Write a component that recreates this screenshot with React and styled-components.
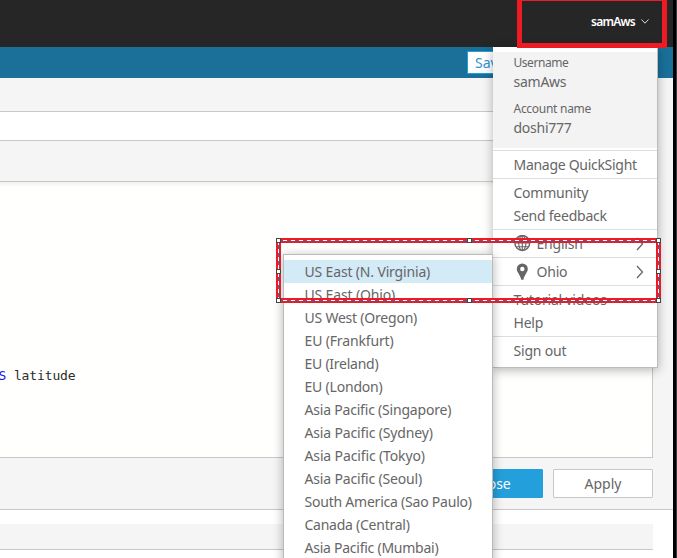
import React from "react";
import styled, { createGlobalStyle } from "styled-components";

const Global = createGlobalStyle`
  * { box-sizing: border-box; }
  html, body { margin: 0; height: 558px; overflow: hidden; background: #fff; }
  body { font-family: "Noto Sans", "Open Sans", sans-serif; color: #666; }
`;

const Screen = styled.div`
  position: relative;
  display: flex;
  width: 677px;
  height: 558px;
  overflow: hidden;
`;
const Page = styled.div`
  width: 673px;
  display: flex;
  flex-direction: column;
  background: #fff;
`;
const WindowEdge = styled.div`
  width: 4px;
  background: #000;
  border-right: 1px solid #37393a;
`;
const Header = styled.header`
  height: 47px;
  flex: none;
  background: #262626;
  display: flex;
  justify-content: flex-end;
  align-items: center;
  padding: 0 24px 4px 0;
  gap: 6px;
  color: #fff;
`;
const AccountName = styled.span`
  font-size: 12px;
  line-height: 16px;
  font-weight: 600;
  letter-spacing: -0.75px;
`;
const Toolbar = styled.div`
  height: 31px;
  flex: none;
  background: #1a7099;
  padding: 4px 0 0 467px;
`;
const SaveButton = styled.button`
  display: block;
  width: 60px;
  height: 23px;
  padding: 0 0 0 7px;
  border: 1px solid #23a0db;
  background: #fff;
  color: #2f94cd;
  text-align: left;
  font: 14px/21px "Noto Sans", sans-serif;
`;
const Workspace = styled.main`
  display: flex;
  flex-direction: column;
  height: 432px;
  flex: none;
  background: #f5f5f5;
  border-bottom: 1px solid #c8c8c8;
  padding-right: 20px;
`;
const NameField = styled.div`
  flex: none;
  margin-top: 33px;
  height: 30px;
  background: #fff;
  border: 1px solid #c8c8c8;
  border-left: 0;
`;
const Editor = styled.div`
  flex: none;
  margin-top: 40px;
  height: 277px;
  background: linear-gradient(#f1f1f0, #fffffd 5px);
  border: 1px solid #c8c8c8;
  border-left: 0;
  padding-top: 186px;
  font: 13px/16px "DejaVu Sans Mono", monospace;
  letter-spacing: -0.13px;
  text-indent: -1.5px;
  color: #2c2c2c;
  white-space: pre;
`;
const Keyword = styled.span`
  color: #1414f0;
`;
const Actions = styled.div`
  display: flex;
  justify-content: flex-end;
  gap: 10px;
  padding-top: 11px;
`;
const Button = styled.button`
  width: 100px;
  height: 29px;
  padding: 0;
  border: 1px solid ${(p) => (p.$primary ? "#23a0db" : "#c8c8c8")};
  border-radius: 1px;
  background: ${(p) => (p.$primary ? "#23a0db" : "#fff")};
  color: ${(p) => (p.$primary ? "#fff" : "#666")};
  font: 14px/27px "Noto Sans", sans-serif;
`;
const ResultsHeader = styled.div`
  flex: none;
  margin: 14px 20px 0 0;
  height: 26px;
  background: #f5f5f5;
  border-bottom: 1px solid #c8c8c8;
`;

const Menu = styled.nav`
  position: absolute;
  left: 493px;
  top: 47px;
  width: 165px;
  height: 321px;
  padding-top: 5px;
  background: #fff;
  border-right: 1px solid #bbb;
  border-bottom: 1px solid #bbb;
  box-shadow: 0 2px 10px rgba(0, 0, 0, 0.3);
`;
const Identity = styled.div`
  height: 96px;
  margin-bottom: 2px;
  padding-left: 20.5px;
  background: #f3f3f3;
`;
const Label = styled.div`
  font-size: 12px;
  line-height: 18px;
  padding-top: ${(p) => p.$top}px;
  letter-spacing: ${(p) => p.$ls}px;
`;
const Value = styled.div`
  font-size: 14px;
  line-height: ${(p) => p.$lh}px;
  letter-spacing: -0.25px;
`;
const Section = styled.div`
  border-top: 1px solid #ddd;
  padding: 2px 0;
`;
const MenuItem = styled.div`
  height: 23px;
  padding: 0 13px 0 20.5px;
  display: flex;
  align-items: center;
  font-size: 14px;
  line-height: 23px;
  white-space: nowrap;
  letter-spacing: ${(p) => p.$ls}px;
`;
const ItemIcon = styled.span`
  width: 23px;
  display: flex;
  align-items: center;
`;
const ItemText = styled.span`
  flex: 1;
`;
const Submenu = styled.ul`
  position: absolute;
  left: 283px;
  top: 254px;
  width: 210px;
  height: 330px;
  margin: 0;
  padding: 5px 0 0;
  list-style: none;
  background: #fff;
  border: 1px solid #bbb;
  box-shadow: 0 2px 10px rgba(0, 0, 0, 0.3);
`;
const Region = styled.li`
  height: 23px;
  padding-left: 20.5px;
  font-size: 14px;
  line-height: 23px;
  white-space: nowrap;
  background: ${(p) => (p.$active ? "#d3eaf7" : "transparent")};
  letter-spacing: ${(p) => p.$ls}px;
`;
const HeaderMark = styled.div`
  position: absolute;
  left: 517px;
  top: -4px;
  width: 150px;
  height: 52px;
  border: 5px solid #ed1c24;
`;
const SelectionMark = styled.svg`
  position: absolute;
  left: 276px;
  top: 238px;
`;

const Globe = () => (
  <svg width="17" height="17" viewBox="0 0 17 17" fill="none" stroke="#666" strokeWidth="1.1">
    <circle cx="8.3" cy="8" r="7.4" strokeWidth="1.5" />
    <ellipse cx="8.3" cy="8" rx="3.6" ry="7.4" />
    <path d="M8.3 .6v15M1 8h15M2.300 4.200h12M2.300 11.800h12" />
  </svg>
);
const Pin = () => (
  <svg width="17" height="18" viewBox="0 0 17 18" fill="#666" fillRule="evenodd">
    <path d="M8.300 .5a5.500 5.500 0 0 1 5.500 5.500c0 3.300-3.600 6-4.400 10.800H7.200C6.400 12 2.800 9.300 2.800 6A5.500 5.500 0 0 1 8.300 .5ZM8.300 3.800a2.200 2.200 0 1 0 0 4.400 2.200 2.200 0 0 0 0-4.400Z" />
  </svg>
);
const Chevron = () => (
  <svg width="8" height="14" viewBox="0 0 8 14" fill="none" stroke="#666" strokeWidth="1.3">
    <path d="M1 1l5.500 6L1 13" />
  </svg>
);

const sections = [
  [{ text: "Manage QuickSight", ls: -0.29 }],
  [{ text: "Community", ls: -0.23 }, { text: "Send feedback", ls: -0.24 }],
  [{ text: "English", ls: -0.2, icon: <Globe /> }],
  [{ text: "Ohio", ls: -0.2, icon: <Pin /> }],
  [{ text: "Tutorial videos", ls: -0.2 }, { text: "Help", ls: -0.2 }],
  [{ text: "Sign out", ls: -0.2 }],
];

const regions = [
  ["US East (N. Virginia)", -0.16],
  ["US East (Ohio)", -0.15],
  ["US West (Oregon)", -0.22],
  ["EU (Frankfurt)", -0.15],
  ["EU (Ireland)", -0.25],
  ["EU (London)", -0.2],
  ["Asia Pacific (Singapore)", -0.2],
  ["Asia Pacific (Sydney)", -0.15],
  ["Asia Pacific (Tokyo)", -0.13],
  ["Asia Pacific (Seoul)", -0.17],
  ["South America (Sao Paulo)", -0.22],
  ["Canada (Central)", -0.25],
  ["Asia Pacific (Mumbai)", -0.25],
];

const handles = [
  [0, 0], [191, 0], [380, 0], [0, 31], [380, 31], [0, 60], [191, 60], [380, 60],
];

export default function App() {
  return (
    <>
      <Global />
      <Screen>
        <Page>
          <Header>
            <AccountName>samAws</AccountName>
            <svg width="8" height="6" viewBox="0 0 8 6" fill="none" stroke="#ddd">
              <path d="M.5 .5L4 4.200 7.500 .5" />
            </svg>
          </Header>
          <Toolbar>
            <SaveButton>Save</SaveButton>
          </Toolbar>
          <Workspace>
            <NameField />
            <Editor>
              <Keyword>S</Keyword> latitude
            </Editor>
            <Actions>
              <Button $primary>Close</Button>
              <Button>Apply</Button>
            </Actions>
          </Workspace>
          <ResultsHeader />
        </Page>
        <WindowEdge />
        <Menu>
          <Identity>
            <Label $top={2} $ls={-0.45}>Username</Label>
            <Value $lh={19}>samAws</Value>
            <Label $top={9} $ls={-0.28}>Account name</Label>
            <Value $lh={19}>doshi777</Value>
          </Identity>
          {sections.map((items, i) => (
            <Section key={i}>
              {items.map((item) => (
                <MenuItem key={item.text} $ls={item.ls}>
                  {item.icon && <ItemIcon>{item.icon}</ItemIcon>}
                  <ItemText>{item.text}</ItemText>
                  {item.icon && <Chevron />}
                </MenuItem>
              ))}
            </Section>
          ))}
        </Menu>
        <Submenu>
          {regions.map(([name, ls], i) => (
            <Region key={name} $active={i === 0} $ls={ls}>{name}</Region>
          ))}
        </Submenu>
        <HeaderMark />
        <SelectionMark width="385" height="65" viewBox="0 0 385 65" fill="none" shapeRendering="crispEdges">
          <rect x="2.5" y="2.5" width="380" height="60" stroke="#ed1c24" strokeWidth="5" />
          <rect x="2.5" y="2.5" width="380" height="60" stroke="#fff" />
          <rect x="2.5" y="2.5" width="380" height="60" stroke="#1971c9" strokeDasharray="4 4" />
          {handles.map(([x, y]) => (
            <rect key={`${x}-${y}`} x={x + 0.5} y={y + 0.5} width="4" height="4" fill="#fff" stroke="#444" />
          ))}
        </SelectionMark>
      </Screen>
    </>
  );
}
